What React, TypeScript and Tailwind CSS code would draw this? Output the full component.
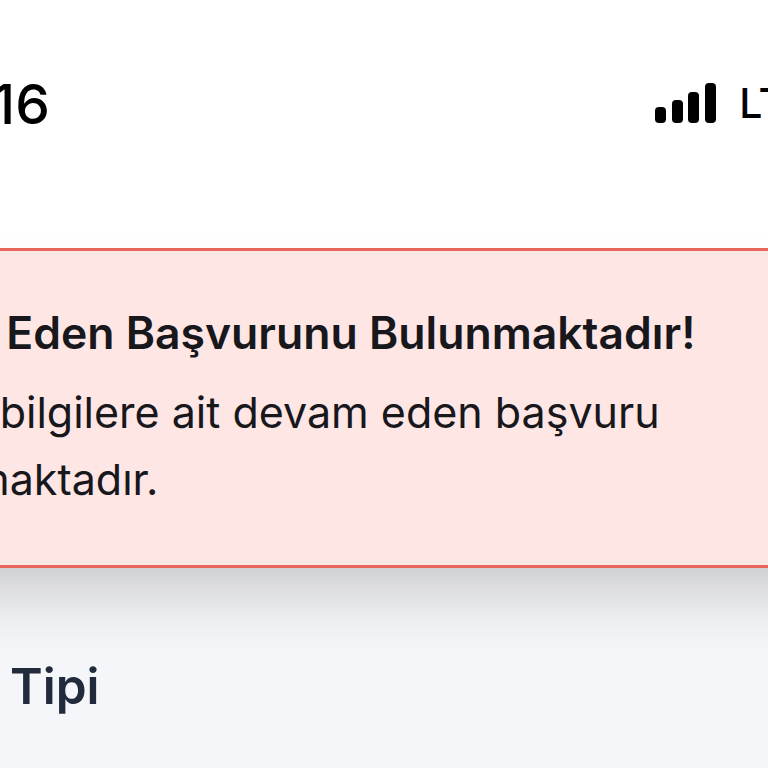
import React from 'react';

const App: React.FC = () => {
  return (
    <div className="w-[768px] h-[768px] overflow-hidden flex flex-col bg-[#f5f6f9] [font-family:Inter,sans-serif]">
      {/* Status bar */}
      <div className="h-[248px] bg-white flex justify-between items-start pt-[73px] shrink-0">
        <span className="ml-[-59px] text-[55px] leading-[62px] font-medium text-black whitespace-nowrap">
          9:16
        </span>
        <div className="flex items-end gap-[23px] mr-[-42px] mt-[10px]">
          <svg width="61" height="40" viewBox="0 0 61 40" className="fill-black">
            <rect x="0" y="24" width="11" height="16" rx="4" />
            <rect x="17" y="17" width="11" height="23" rx="4" />
            <rect x="33" y="9" width="11" height="31" rx="4" />
            <rect x="50" y="0" width="11" height="40" rx="4" />
          </svg>
          <span className="text-[41px] leading-[40px] font-medium text-black">LTE</span>
        </div>
      </div>

      {/* Alert */}
      <div className="h-[320px] mx-[-120px] shrink-0 bg-[#fee6e5] border-y-[3px] border-[#e8675c] shadow-[0_40px_70px_-24px_rgba(0,0,0,0.22)] pt-[58px] whitespace-nowrap text-[#17171c] relative">
        <p className="ml-[-34px] text-[44.5px] leading-[48px] font-semibold">Devam Eden Başvurunu Bulunmaktadır!</p>
        <p className="ml-[-249px] mt-[21px] text-[43px] leading-[68px]">Girmiş olduğunuz bilgilere ait devam eden başvuru</p>
        <p className="ml-[-21px] mt-[-1px] text-[43px] leading-[68px]">bulunmaktadır.</p>
      </div>

      {/* Section title */}
      <div className="pt-[90px]">
        <p className="ml-[-200px] text-[49.5px] leading-[56px] font-semibold text-[#222b3c] whitespace-nowrap">Başvuru Tipi</p>
      </div>
    </div>
  );
};

export default App;
